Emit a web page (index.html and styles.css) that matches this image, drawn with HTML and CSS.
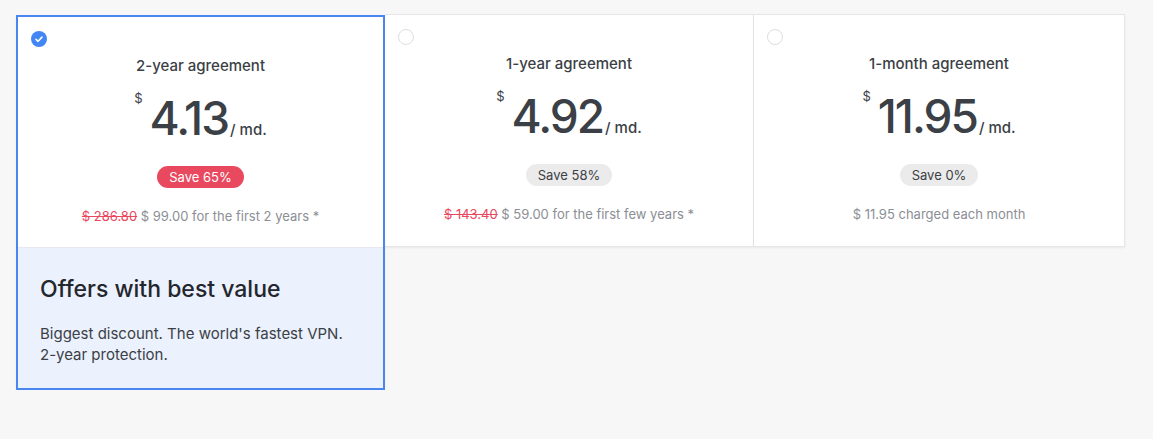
FILE: index.html
```html
<!DOCTYPE html>
<html>
<head>
<meta charset="utf-8">
<link rel="stylesheet" href="styles.css">
</head>
<body>
<div class="plans">
  <div class="plan plan--selected">
    <div class="plan-main">
      <span class="radio radio--checked">
        <svg viewBox="0 0 16 16" width="16" height="16"><circle cx="8" cy="8" r="8" fill="#4285f4"/><path d="M5 8.3 L7.1 10.3 L11 6.1" fill="none" stroke="#fff" stroke-width="1.6" stroke-linecap="round" stroke-linejoin="round"/></svg>
      </span>
      <div class="plan-title">2-year agreement</div>
      <div class="price"><span class="cur">$</span><span class="amount">4.13</span><span class="per">/ md.</span></div>
      <span class="badge badge--hot">Save 65%</span>
      <div class="note"><s class="old">$ 286.80</s> $ 99.00 for the first 2 years *</div>
    </div>
    <div class="plan-extra">
      <h2 class="extra-title">Offers with best value</h2>
      <p class="extra-text">Biggest discount. The world's fastest VPN. 2-year protection.</p>
    </div>
  </div>
  <div class="plan">
    <div class="plan-main">
      <span class="radio"></span>
      <div class="plan-title">1-year agreement</div>
      <div class="price"><span class="cur">$</span><span class="amount">4.92</span><span class="per">/ md.</span></div>
      <span class="badge">Save 58%</span>
      <div class="note"><s class="old">$ 143.40</s> $ 59.00 for the first few years *</div>
    </div>
  </div>
  <div class="plan">
    <div class="plan-main">
      <span class="radio"></span>
      <div class="plan-title">1-month agreement</div>
      <div class="price"><span class="cur">$</span><span class="amount">11.95</span><span class="per">/ md.</span></div>
      <span class="badge">Save 0%</span>
      <div class="note">$ 11.95 charged each month</div>
    </div>
  </div>
</div>
</body>
</html>
```
FILE: styles.css
```css
html, body {
  margin: 0;
  background: #f7f7f7;
}
body {
  padding: 14px 28px 0 16px;
  font-family: Inter, "Noto Sans", sans-serif;
  color: #3b3f46;
}
.plans {
  display: grid;
  grid-template-columns: 369px 369px 371px;
  align-items: start;
}
.plan {
  position: relative;
  background: #fff;
  border: 1px solid #e6e6e6;
  border-left: none;
  box-shadow: 0 1px 2px rgba(0,0,0,0.06);
}
.plan--selected {
  border: 2px solid #4a86f0;
  margin-top: 1px;
  z-index: 1;
}
.plan-main {
  height: 231px;
  box-sizing: border-box;
  padding-top: 39px;
  display: flex;
  flex-direction: column;
  align-items: center;
}
.plan--selected .plan-main {
  height: 230px;
}
.radio {
  position: absolute;
  top: 14px;
  left: 13px;
  width: 16px;
  height: 16px;
  box-sizing: border-box;
  border: 1.5px solid #dedede;
  border-radius: 50%;
}
.radio--checked {
  border: none;
  top: 14px;
  left: 13px;
}
.radio svg { display: block; }
.plan-title {
  font-size: 15px;
  line-height: 20px;
  font-weight: 500;
  color: #3b3f46;
}
.price {
  display: flex;
  align-items: baseline;
  margin-top: 16px;
  height: 52px;
  color: #3b3f46;
}
.cur {
  font-size: 13px;
  align-self: flex-start;
  margin-right: 7px;
  margin-top: -2px;
}
.amount {
  font-size: 46px;
  line-height: 52px;
  font-weight: 500;
  letter-spacing: -2px;
}
.per {
  font-size: 15px;
  font-weight: 500;
  margin-left: 2px;
}
.badge {
  margin-top: 22px;
  height: 22px;
  line-height: 22px;
  padding: 0 12px;
  border-radius: 11px;
  background: #ebebeb;
  font-size: 13px;
  color: #3b3f46;
}
.badge--hot {
  background: #e8495f;
  color: #fff;
}
.note {
  margin-top: 19px;
  font-size: 13px;
  line-height: 18px;
  color: #8b8e94;
}
.old {
  color: #e8495f;
  text-decoration: line-through;
}
.plan-extra {
  background: #ebf1fd;
  border-top: 1px solid #e6e9f0;
  padding: 27px 24px 24px 22px;
  height: 141px;
  box-sizing: border-box;
}
.extra-title {
  margin: 0;
  font-size: 23px;
  line-height: 28px;
  font-weight: 500;
  color: #23262c;
}
.extra-text {
  margin: 20px 0 0;
  font-size: 15px;
  line-height: 21px;
  color: #3b3f46;
  max-width: 304px;
}
```
